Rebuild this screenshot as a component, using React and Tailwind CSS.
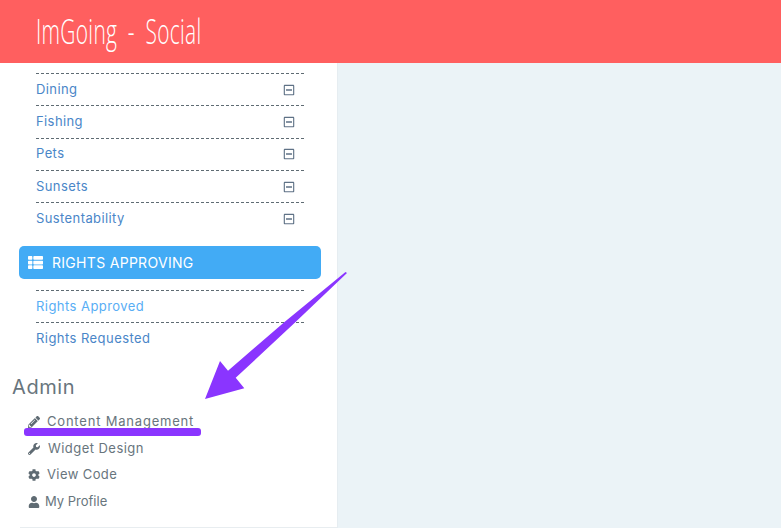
import { FaCog, FaPencilAlt, FaRegMinusSquare, FaThList, FaUser, FaWrench } from "react-icons/fa"

const tags = ["Dining", "Fishing", "Pets", "Sunsets", "Sustentability"]

const adminLinks = [
  { label: "Content Management", icon: FaPencilAlt, cls: "gap-[7px] tracking-[0.8px]" },
  { label: "Widget Design", icon: FaWrench, cls: "gap-[8px] tracking-[0.45px]" },
  { label: "View Code", icon: FaCog, cls: "gap-[7px] tracking-[0.4px]" },
  { label: "My Profile", icon: FaUser, cls: "gap-[5px] tracking-[0px]" },
]

function App() {
  return (
    <div className="relative h-[528px] w-[781px] overflow-hidden bg-[#ebf3f7] font-['Inter',sans-serif]">
      <header className="flex h-[63px] items-center bg-[#ff5f5f] pl-[36px]">
        <span className="origin-left scale-x-[0.615] font-['Open_Sans',sans-serif] text-[34px] font-light tracking-[0.5px] whitespace-nowrap text-white [word-spacing:8px]">
          ImGoing - Social
        </span>
      </header>

      <aside className="h-[465px] w-[338px] border-r border-[#e6edf1] bg-white pt-[10px]">
        <ul className="mx-[36px] w-[268px]">
          {tags.map((tag) => (
            <li
              key={tag}
              className="flex h-[32.3px] items-center justify-between border-t border-dashed border-[#5f6b73] pr-[9px] text-[13px] tracking-[0.4px] text-[#4a86c8]"
            >
              {tag}
              <FaRegMinusSquare className="text-[12px] text-[#5f7286]" />
            </li>
          ))}
        </ul>

        <div className="mx-[19px] mt-[12px] flex h-[33px] w-[302px] items-center gap-[9px] rounded-[5px] bg-[#42abf5] pl-[9px] text-[14px] tracking-[0.3px] text-white">
          <FaThList className="text-[15px]" />
          RIGHTS APPROVING
        </div>

        <ul className="mx-[36px] mt-[11px] w-[268px] text-[13px] tracking-[0.45px]">
          <li className="flex h-[32px] items-center border-t border-dashed border-[#5f6b73] text-[#58aef5]">Rights Approved</li>
          <li className="flex h-[32px] items-center border-t border-dashed border-[#5f6b73] text-[#4a86c8]">Rights Requested</li>
        </ul>

        <h2 className="mt-[18px] ml-[12px] text-[20px] leading-[30px] tracking-[0.6px] text-[#68757d]">Admin</h2>

        <ul className="mt-[6px] ml-[28px] text-[13px] text-[#68757d]">
          {adminLinks.map(({ label, icon: Icon, cls }) => (
            <li key={label} className={`flex h-[26.7px] items-center ${cls}`}>
              <Icon className="text-[12px] text-[#5f6b73]" />
              {label}
            </li>
          ))}
        </ul>

        <div className="mt-[12px] ml-[20px] border-t border-[#e8edf0]" />
      </aside>

      <div className="absolute top-[428px] left-[24px] h-[8px] w-[177px] rounded-[3px] bg-[#8a35ff]" />
      <svg className="absolute top-0 left-0" width="781" height="528" viewBox="0 0 781 528">
        <path d="M347 273L345.500 272 284.500 322 228 370.700 220 361 205 399 244.300 388.300 235.700 377.800 294.500 323Z" fill="#8a35ff" />
      </svg>
    </div>
  )
}

export default App
